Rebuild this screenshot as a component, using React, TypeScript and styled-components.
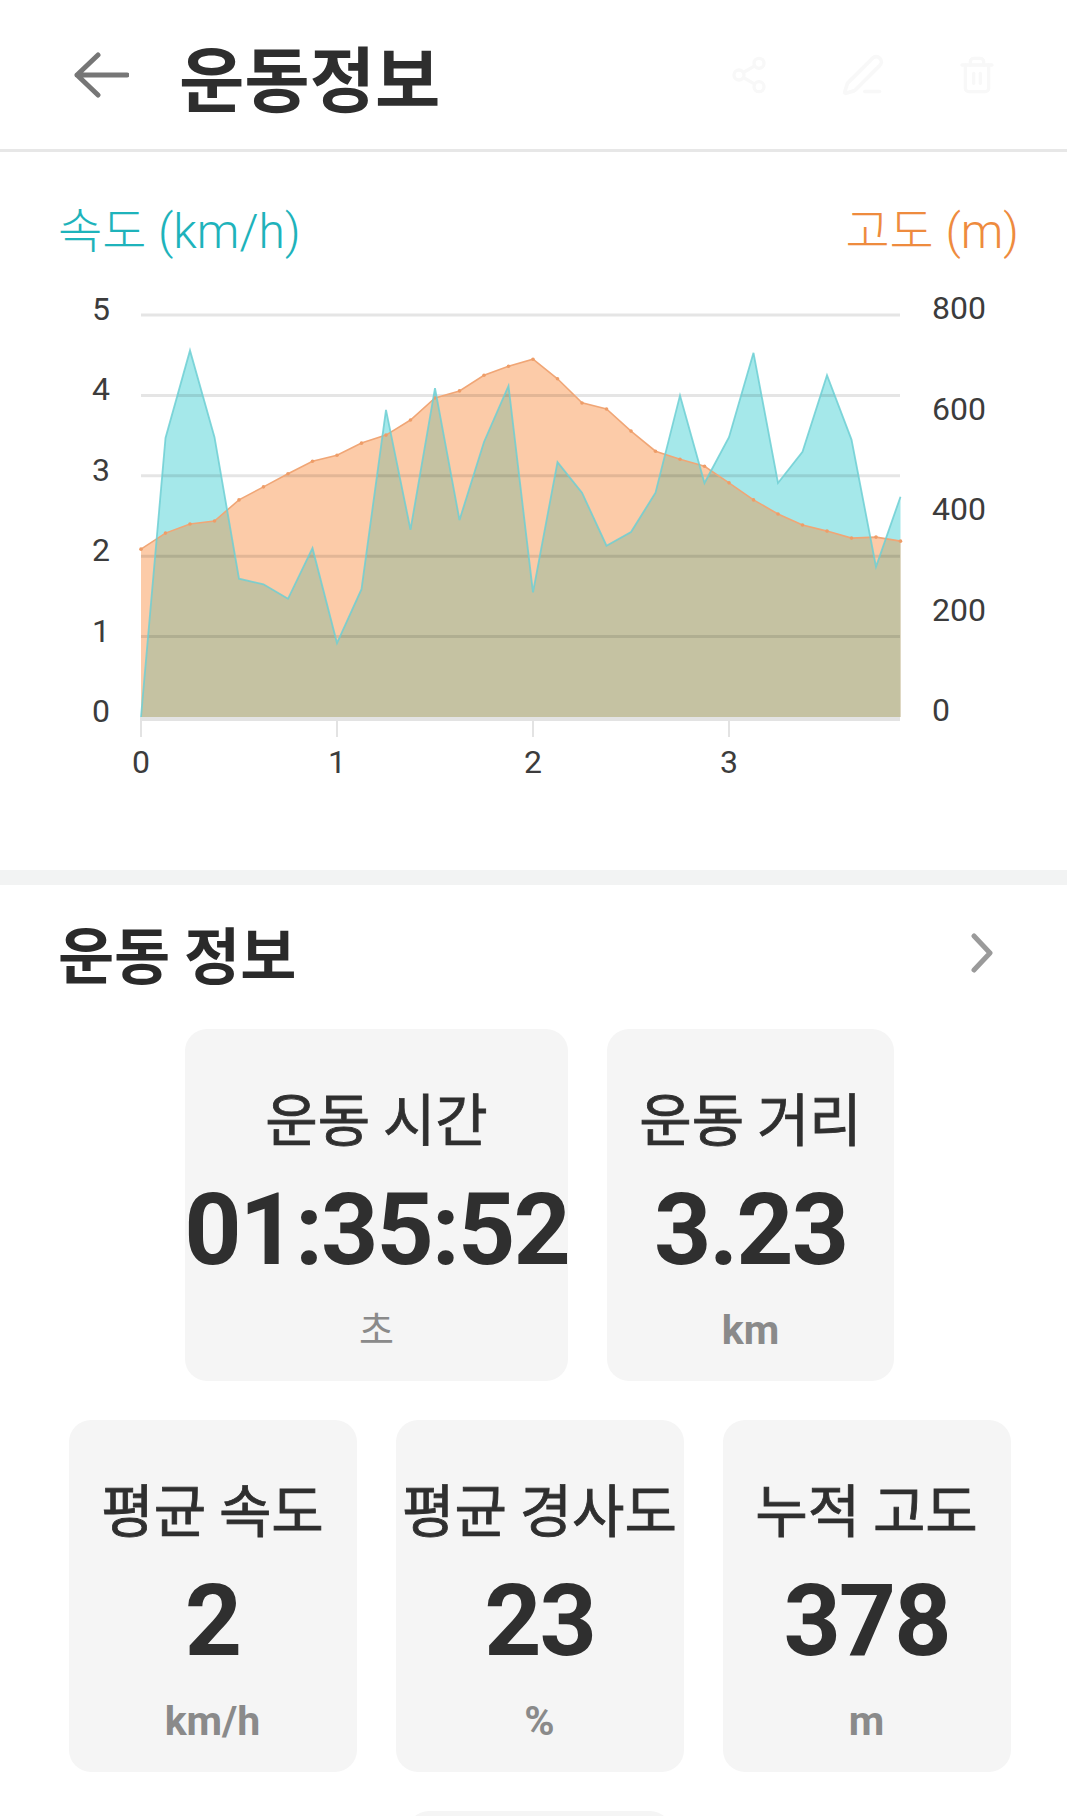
import React from "react";
import styled, { createGlobalStyle } from "styled-components";
import { Share2, PenLine, Trash2 } from "lucide-react";

const GlobalStyle = createGlobalStyle`
  html, body {
    margin: 0;
    padding: 0;
    background: #ffffff;
  }
  body {
    font-family: "Noto Sans CJK KR", Roboto, sans-serif;
    color: #2f2f2f;
  }
`;

// 0.125 km steps
const speed = [
  0, 3.47, 4.56, 3.48, 1.72, 1.65, 1.47, 2.1, 0.92, 1.59, 3.82, 2.33, 4.09, 2.45,
  3.42, 4.12, 1.55, 3.17, 2.79, 2.13, 2.3, 2.79, 4.0, 2.91, 3.48, 4.53, 2.91, 3.3,
  4.25, 3.45, 1.87, 2.74,
];
const altitude = [
  334, 366, 384, 390, 432, 458, 484, 509, 521, 545, 561, 591, 635, 649, 680, 698,
  712, 673, 625, 613, 569, 529, 513, 499, 466, 432, 404, 382, 370, 356, 358, 350,
];

const stats = [
  [
    { label: "운동 시간", value: "01:35:52", unit: "초", width: 383 },
    { label: "운동 거리", value: "3.23", unit: "km", width: 287 },
  ],
  [
    { label: "평균 속도", value: "2", unit: "km/h", width: 288 },
    { label: "평균 경사도", value: "23", unit: "%", width: 288 },
    { label: "누적 고도", value: "378", unit: "m", width: 288 },
  ],
  [{ label: "", value: "", unit: "", width: 265 }],
];

const X0 = 141;
const DX = 24.5;
const BASE = 437;
const PLOT_W = 759;
const SPEED_UNIT = 80.4;
const ALT_UNIT = 402 / 800;

const px = (i: number) => X0 + i * DX;

function linePath(values: number[], scale: number) {
  return values
    .map((v, i) => `${i === 0 ? "M" : "L"}${px(i).toFixed(1)},${(BASE - v * scale).toFixed(1)}`)
    .join(" ");
}

function areaPath(values: number[], scale: number) {
  const last = px(values.length - 1).toFixed(1);
  return `${linePath(values, scale)} L${last},${BASE} L${X0},${BASE} Z`;
}

function Chart() {
  const speedArea = areaPath(speed, SPEED_UNIT);
  const altArea = areaPath(altitude, ALT_UNIT);
  return (
    <ChartSvg viewBox="0 0 1067 590" width={1067} height={590}>
      <defs>
        <clipPath id="alt-clip">
          <path d={altArea} />
        </clipPath>
      </defs>
      <line x1={X0} x2={X0 + PLOT_W} y1={BASE + 2} y2={BASE + 2} stroke="#e3e3e3" strokeWidth={4} />
      {[0, 1, 2, 3].map((t) => (
        <line key={t} x1={X0 + t * 196} x2={X0 + t * 196} y1={BASE} y2={BASE + 20} stroke="#e3e3e3" strokeWidth={2} />
      ))}
      <path d={speedArea} fill="#a5e8ea" />
      <path d={altArea} fill="#fccba8" />
      <path d={speedArea} fill="#c5c2a2" clipPath="url(#alt-clip)" />
      {[1, 2, 3, 4, 5].map((v) => (
        <line
          key={v}
          x1={X0}
          x2={X0 + PLOT_W}
          y1={BASE - v * SPEED_UNIT}
          y2={BASE - v * SPEED_UNIT}
          stroke="rgba(0,0,0,0.1)"
          strokeWidth={3}
        />
      ))}
      <path d={linePath(altitude, ALT_UNIT)} fill="none" stroke="#f0a676" strokeWidth={1.6} />
      {altitude.map((v, i) => (
        <circle key={i} cx={px(i)} cy={BASE - v * ALT_UNIT} r={1.8} fill="#ee9d68" />
      ))}
      <path d={linePath(speed, SPEED_UNIT)} fill="none" stroke="#6dcfd4" strokeWidth={1.8} strokeOpacity={0.85} />

      <g fill="#3c3c3c" fontFamily="Roboto, sans-serif" fontSize={32} fontWeight={400}>
        {[0, 1, 2, 3, 4, 5].map((v) => (
          <text key={v} x={110} y={BASE - v * SPEED_UNIT + 5} textAnchor="end">
            {v}
          </text>
        ))}
        {[0, 200, 400, 600, 800].map((v) => (
          <text key={v} x={932} y={BASE - v * ALT_UNIT + 4}>
            {v}
          </text>
        ))}
        {[0, 1, 2, 3].map((t) => (
          <text key={t} x={X0 + t * 196} y={493} textAnchor="middle">
            {t}
          </text>
        ))}
      </g>
    </ChartSvg>
  );
}

export default function App() {
  return (
    <Page>
      <GlobalStyle />
      <Header>
        <BackButton aria-label="back">
          <svg width="56" height="46" viewBox="0 0 56 46">
            <path
              d="M54 23 H4 M25 3 L4 23 L25 43"
              fill="none"
              stroke="#767676"
              strokeWidth={5}
              strokeLinecap="round"
              strokeLinejoin="round"
            />
          </svg>
        </BackButton>
        <HeaderTitle>운동정보</HeaderTitle>
        <HeaderActions>
          <Share2 size={40} color="#f8f8f8" strokeWidth={2} />
          <PenLine size={44} color="#f8f8f8" strokeWidth={2} />
          <Trash2 size={40} color="#f8f8f8" strokeWidth={2} />
        </HeaderActions>
      </Header>

      <ChartSection>
        <Legend>
          <LegendLabel $color="#1eb3bb">속도 (km/h)</LegendLabel>
          <LegendLabel $color="#ee8b3e">고도 (m)</LegendLabel>
        </Legend>
        <Chart />
      </ChartSection>

      <Divider />

      <InfoSection>
        <InfoHeader>
          <InfoTitle>운동 정보</InfoTitle>
          <MoreButton aria-label="more">
            <svg width="24" height="40" viewBox="0 0 24 40">
              <path
                d="M4 3 L20 20 L4 37"
                fill="none"
                stroke="#9a9a9a"
                strokeWidth={5}
                strokeLinecap="round"
                strokeLinejoin="round"
              />
            </svg>
          </MoreButton>
        </InfoHeader>

        <CardGrid>
          {stats.map((row, r) => (
            <CardRow key={r}>
              {row.map((s, i) => (
                <StatCard key={i} $width={s.width}>
                  {s.label && <StatLabel>{s.label}</StatLabel>}
                  {s.value && <StatValue>{s.value}</StatValue>}
                  {s.unit && <StatUnit $hangul={s.unit === "초"}>{s.unit}</StatUnit>}
                </StatCard>
              ))}
            </CardRow>
          ))}
        </CardGrid>
      </InfoSection>
    </Page>
  );
}

const Page = styled.div`
  width: 1067px;
  min-height: 1816px;
  background: #ffffff;
  overflow: hidden;
`;

const Header = styled.header`
  height: 149px;
  display: flex;
  align-items: center;
  padding: 0 70px 0 73px;
  border-bottom: 3px solid #e7e7e7;
`;

const BackButton = styled.button`
  border: none;
  background: none;
  padding: 0;
  width: 56px;
  height: 46px;
  display: flex;
`;

const HeaderTitle = styled.h1`
  margin: 0 0 0 50px;
  font-size: 71px;
  line-height: 80px;
  font-weight: 700;
  color: #2e2e2e;
`;

const HeaderActions = styled.div`
  margin-left: auto;
  display: flex;
  align-items: center;
  gap: 72px;
`;

const ChartSection = styled.section`
  padding-top: 50px;
`;

const Legend = styled.div`
  display: flex;
  justify-content: space-between;
  padding: 0 48px 0 58px;
  height: 60px;
  margin-bottom: 18px;
`;

const LegendLabel = styled.span<{ $color: string }>`
  font-family: Roboto, "Noto Sans CJK KR", sans-serif;
  font-size: 48px;
  line-height: 60px;
  font-weight: 300;
  color: ${(p) => p.$color};
`;

const ChartSvg = styled.svg`
  display: block;
`;

const Divider = styled.div`
  height: 15px;
  background: #f2f3f3;
`;

const InfoSection = styled.section`
  padding-top: 33px;
`;

const InfoHeader = styled.div`
  display: flex;
  align-items: center;
  justify-content: space-between;
  padding: 0 73px 0 58px;
  height: 70px;
`;

const InfoTitle = styled.h2`
  margin: 0;
  font-size: 61px;
  line-height: 70px;
  font-weight: 700;
  color: #2a2a2a;
`;

const MoreButton = styled.button`
  border: none;
  background: none;
  padding: 0;
  display: flex;
`;

const CardGrid = styled.div`
  margin-top: 41px;
  padding-left: 12px;
  display: flex;
  flex-direction: column;
  gap: 39px;
`;

const CardRow = styled.div`
  display: flex;
  justify-content: center;
  gap: 39px;
`;

const StatCard = styled.div<{ $width: number }>`
  width: ${(p) => p.$width}px;
  height: 352px;
  flex: none;
  box-sizing: border-box;
  padding-top: 57px;
  border-radius: 22px;
  background: #f5f5f5;
  display: flex;
  flex-direction: column;
  align-items: center;
`;

const StatLabel = styled.div`
  font-size: 57px;
  line-height: 60px;
  font-weight: 400;
  -webkit-text-stroke: 0.8px #2f2f2f;
  color: #2f2f2f;
  white-space: nowrap;
`;

const StatValue = styled.div`
  margin-top: 34px;
  font-family: Roboto, sans-serif;
  font-size: 100px;
  line-height: 100px;
  font-weight: 700;
  letter-spacing: -2px;
  color: #2f2f2f;
  white-space: nowrap;
`;

const StatUnit = styled.div<{ $hangul: boolean }>`
  margin-top: 25px;
  font-family: Roboto, "Noto Sans CJK KR", sans-serif;
  font-size: ${(p) => (p.$hangul ? "38px" : "41px")};
  line-height: 50px;
  font-weight: ${(p) => (p.$hangul ? 400 : 700)};
  color: #8a8a8a;
`;
